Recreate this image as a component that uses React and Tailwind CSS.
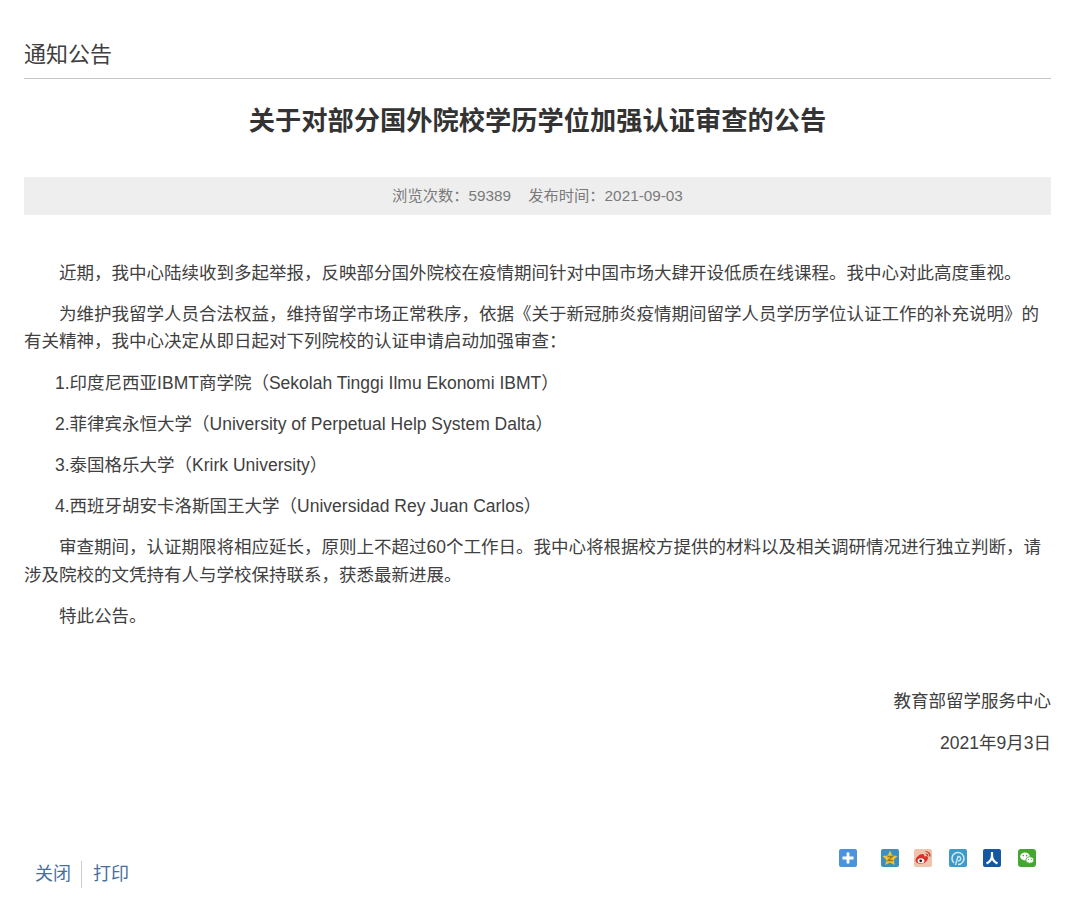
const cjk = { fontFamily: '"Liberation Sans", "Noto Sans CJK SC", sans-serif' };

function ShareIcons() {
  return (
    <div className="flex items-center">
      <svg width="18" height="18" viewBox="0 0 18 18" className="mr-[24px]">
        <rect width="18" height="18" rx="2" fill="#4d93dc" />
        <path d="M9 3.500v11M3.500 9h11" stroke="#fff" strokeWidth="2.800" />
      </svg>
      <svg width="18" height="18" viewBox="0 0 18 18" className="mr-[15px]">
        <rect width="18" height="18" rx="2" fill="#3c8fc2" />
        <path d="M9 1.500l2.300 4.900 5.200.7-3.800 3.600 1 5.300L9 13.400 4.300 16l1-5.300L1.500 7.100l5.200-.7z" fill="#f2c230" />
        <path d="M6.500 7.500h5L6.800 11.500h5" stroke="#9a7a1c" strokeWidth="1.300" fill="none" />
      </svg>
      <svg width="18" height="18" viewBox="0 0 18 18" className="mr-[17px]">
        <rect width="18" height="18" rx="2" fill="#efc4ad" />
        <path d="M1.500 11.500c0-3 4-6.500 7-6.500 1.500 0 2 1 1.500 2.500 2-.7 4-.4 4 1.300 0 3-3.500 6-7.500 6-3 0-5-1.500-5-3.300z" fill="#d8302b" />
        <ellipse cx="7" cy="11.700" rx="3.400" ry="2.500" fill="#fff" />
        <circle cx="6.700" cy="11.800" r="1.400" fill="#222" />
        <path d="M11.500 2.500a4.500 4.500 0 0 1 4.500 5M11.800 5a2 2 0 0 1 1.900 2.300" stroke="#c0392b" strokeWidth="1.200" fill="none" />
      </svg>
      <svg width="18" height="18" viewBox="0 0 18 18" className="mr-[16px]">
        <rect width="18" height="18" rx="2" fill="#3d9bc9" />
        <path d="M5 14a6 6 0 1 1 4 1.500" stroke="#cfeaf5" strokeWidth="1.500" fill="none" />
        <path d="M6.500 16l2.500-8.500a2.200 2.200 0 1 1 0 4.300" stroke="#cfeaf5" strokeWidth="1.400" fill="none" />
      </svg>
      <svg width="18" height="18" viewBox="0 0 18 18" className="mr-[17px]">
        <rect width="18" height="18" rx="2" fill="#14589f" />
        <path d="M9 3v3.500c0 3.500-2.500 6.500-5.500 8M9 6.500c0 3.500 2.500 6.500 5.500 8" stroke="#fff" strokeWidth="2.200" fill="none" />
      </svg>
      <svg width="18" height="18" viewBox="0 0 18 18">
        <rect width="18" height="18" rx="3" fill="#45a82e" />
        <ellipse cx="7" cy="7.500" rx="4.800" ry="3.900" fill="#fff" />
        <ellipse cx="11.800" cy="11" rx="4" ry="3.300" fill="#fff" stroke="#45a82e" strokeWidth="0.800" />
        <circle cx="5.300" cy="6.600" r="0.800" fill="#45a82e" />
        <circle cx="8.600" cy="6.600" r="0.800" fill="#45a82e" />
        <circle cx="10.400" cy="10.500" r="0.600" fill="#45a82e" />
        <circle cx="13.200" cy="10.500" r="0.600" fill="#45a82e" />
      </svg>
    </div>
  );
}

export default function App() {
  return (
    <div className="w-[1080px] h-[917px] bg-white text-[#404040] pl-[24px] pr-[29px] pt-[40px] text-[17.5px] leading-[27.3px]" style={cjk}>
      <div className="border-b border-[#c4c4c4] h-[39px] text-[22px] leading-[30px]">通知公告</div>
      <h1 className="text-center font-bold text-[#333] text-[26.25px] leading-[36px] mt-[24px]">关于对部分国外院校学历学位加强认证审查的公告</h1>
      <div className="mt-[38px] h-[38px] bg-[#eeeeee] text-[#7a7a7a] text-[15.300px] leading-[38px] text-center">
        浏览次数：59389&nbsp;&nbsp;&nbsp; 发布时间：2021-09-03
      </div>
      <div className="mt-[45px] flex flex-col gap-[13.9px]">
        <p className="indent-[35px]">近期，我中心陆续收到多起举报，反映部分国外院校在疫情期间针对中国市场大肆开设低质在线课程。我中心对此高度重视。</p>
        <p className="indent-[35px]">为维护我留学人员合法权益，维持留学市场正常秩序，依据《关于新冠肺炎疫情期间留学人员学历学位认证工作的补充说明》的有关精神，我中心决定从即日起对下列院校的认证申请启动加强审查：</p>
        <p className="indent-[31px]">1.印度尼西亚IBMT商学院（Sekolah Tinggi Ilmu Ekonomi IBMT）</p>
        <p className="indent-[31px]">2.菲律宾永恒大学（University of Perpetual Help System Dalta）</p>
        <p className="indent-[31px]">3.泰国格乐大学（Krirk University）</p>
        <p className="indent-[31px]">4.西班牙胡安卡洛斯国王大学（Universidad Rey Juan Carlos）</p>
        <p className="indent-[35px]">审查期间，认证期限将相应延长，原则上不超过60个工作日。我中心将根据校方提供的材料以及相关调研情况进行独立判断，请涉及院校的文凭持有人与学校保持联系，获悉最新进展。</p>
        <p className="indent-[35px]">特此公告。</p>
      </div>
      <div className="mt-[58px] flex flex-col gap-[14px] text-right">
        <p>教育部留学服务中心</p>
        <p>2021年9月3日</p>
      </div>
      <div className="mt-[92px] flex items-start justify-between pr-[15px]">
        <div className="flex items-center text-[#47709f] text-[18px] leading-[27px] pl-[11px] mt-[12px]">
          <span className="pr-[10px] border-r border-[#ccc]">关闭</span>
          <span className="pl-[11px]">打印</span>
        </div>
        <ShareIcons />
      </div>
    </div>
  );
}
